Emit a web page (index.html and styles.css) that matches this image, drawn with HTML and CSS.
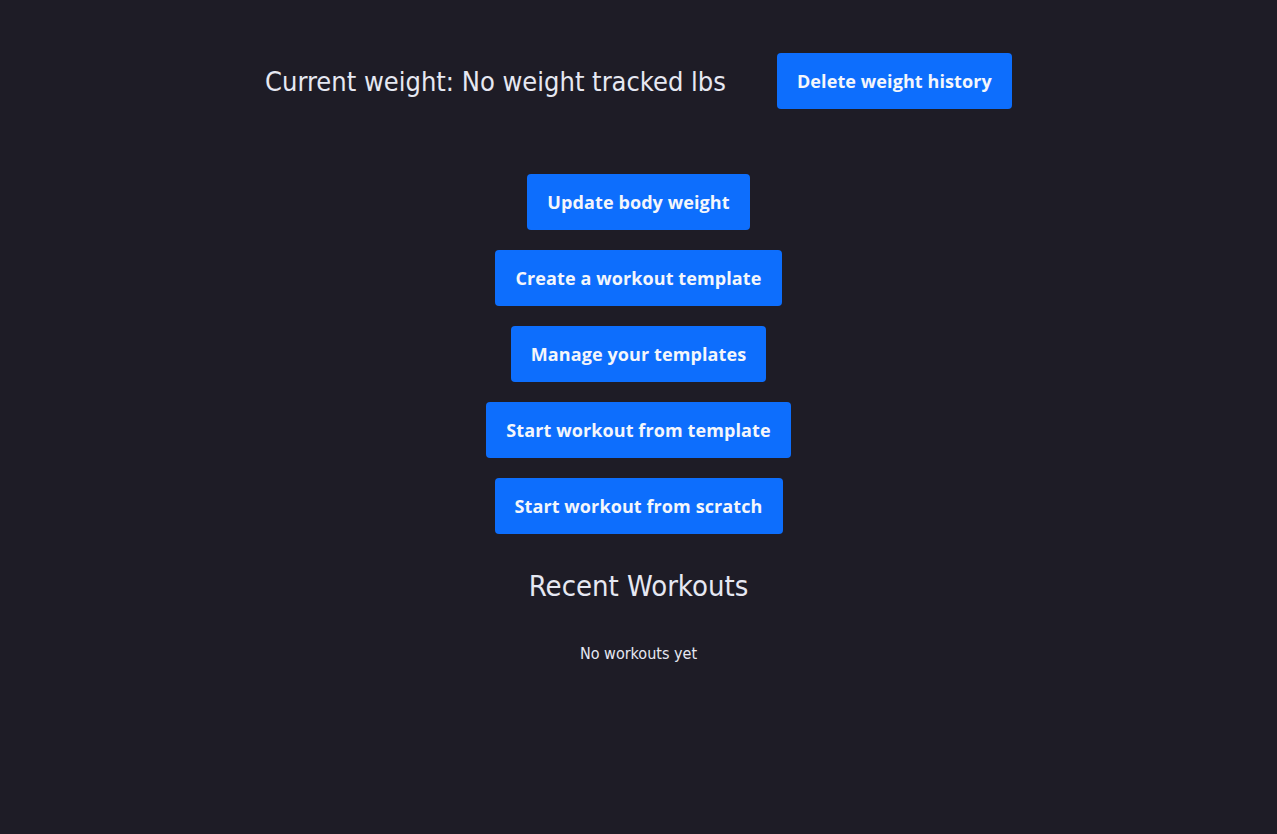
FILE: index.html
```html
<!DOCTYPE html>
<html>
<head>
<meta charset="utf-8">
<link rel="stylesheet" href="styles.css">
</head>
<body>
<main class="page">
  <div class="weight-row">
    <h2 class="weight-title">Current weight: No weight tracked lbs</h2>
    <button class="btn">Delete weight history</button>
  </div>
  <div class="actions">
    <button class="btn">Update body weight</button>
    <button class="btn">Create a workout template</button>
    <button class="btn">Manage your templates</button>
    <button class="btn">Start workout from template</button>
    <button class="btn">Start workout from scratch</button>
  </div>
  <h2 class="recent-title">Recent Workouts</h2>
  <p class="empty">No workouts yet</p>
</main>
</body>
</html>
```
FILE: styles.css
```css
html, body {
  margin: 0;
  padding: 0;
  background: #1e1c26;
  height: 100%;
}
.page {
  display: flex;
  flex-direction: column;
  align-items: center;
  padding-top: 53px;
  font-family: "DejaVu Sans Condensed", "DejaVu Sans", sans-serif;
  color: #e6e8f2;
}
.weight-row {
  display: flex;
  align-items: center;
  gap: 51px;
}
.weight-title {
  margin: 0;
  font-weight: normal;
  font-size: 27px;
}
.btn {
  font-family: "Open Sans", "Noto Sans", sans-serif;
  font-weight: 700;
  font-size: 18px;
  letter-spacing: 0.1px;
  color: #f4f6fb;
  background: #0d6efd;
  border: none;
  border-radius: 4px;
  height: 56px;
  padding: 0 20px;
  cursor: pointer;
}
.actions {
  display: flex;
  flex-direction: column;
  align-items: center;
  gap: 20px;
  margin-top: 65px;
}
.recent-title {
  margin: 35px 0 0;
  font-weight: normal;
  font-size: 29px;
}
.empty {
  margin: 41px 0 0;
  font-size: 16px;
}
```
